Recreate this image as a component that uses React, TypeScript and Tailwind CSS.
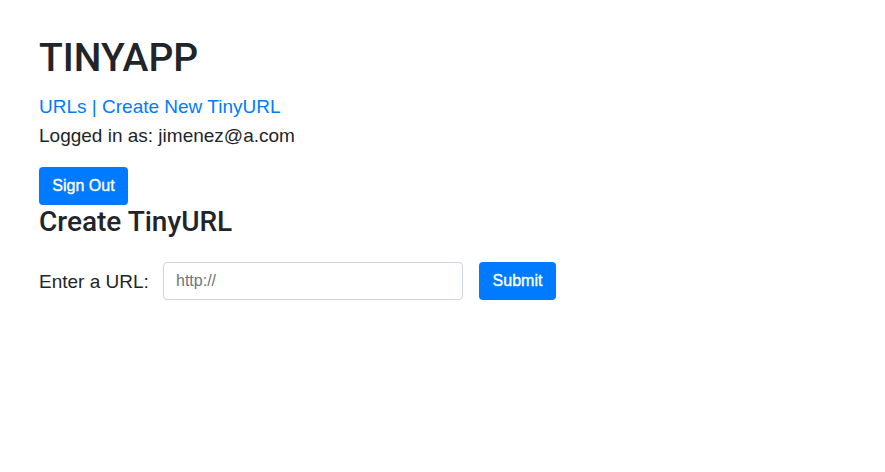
export default function App() {
  return (
    <div className="min-h-[472px] bg-white pl-[39px] pt-[34px] text-[#212529]" style={{ fontFamily: '"Liberation Sans", Arial, sans-serif' }}>
      <h1 className="text-[39px] leading-[48px] font-medium m-0 font-['Roboto',sans-serif]">TINYAPP</h1>
      <div className="mt-[10px] text-[19px] leading-[29px]">
        <a href="#" className="text-[#007bff]">URLs</a>
        <span className="text-[#007bff]"> | </span>
        <a href="#" className="text-[#007bff]">Create New TinyURL</a>
      </div>
      <div className="text-[19px] leading-[29px]">Logged in as: jimenez@a.com</div>
      <button className="mt-[17px] h-[38px] w-[89px] rounded-[4px] bg-[#007bff] text-[16px] text-white [-webkit-text-stroke:0.35px_white]">Sign Out</button>
      <h2 className="text-[28px] leading-[34px] font-medium font-['Roboto',sans-serif]">Create TinyURL</h2>
      <form className="mt-[23px] flex items-center gap-4" onSubmit={(e) => e.preventDefault()}>
        <label className="w-[108px] whitespace-nowrap text-[19px] leading-[29px]">Enter a URL:</label>
        <input
          type="text"
          placeholder="http://"
          className="h-[38px] w-[300px] rounded-[4px] border border-[#ced4da] px-3 text-[16px] placeholder:text-[#6c757d] outline-none"
        />
        <button type="submit" className="h-[38px] w-[77px] rounded-[4px] bg-[#007bff] text-[16px] text-white [-webkit-text-stroke:0.35px_white]">Submit</button>
      </form>
    </div>
  );
}
